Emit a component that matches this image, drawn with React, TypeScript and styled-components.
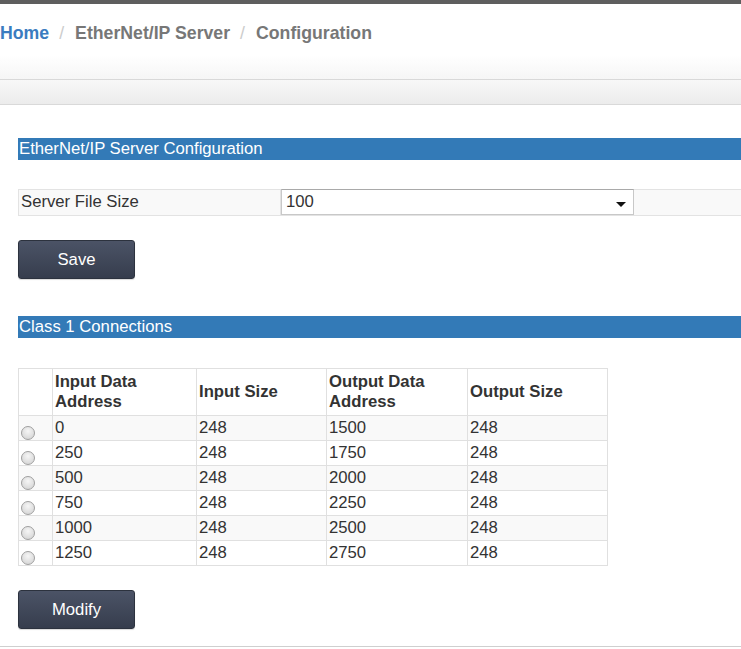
import React from "react";
import styled, { createGlobalStyle } from "styled-components";

const GlobalStyle = createGlobalStyle`
  html, body {
    margin: 0;
    padding: 0;
    background: #fff;
    overflow: hidden;
  }
  body {
    font-family: "Liberation Sans", Arial, sans-serif;
    color: #333;
  }
`;

const Page = styled.div`
  width: 741px;
  height: 649px;
  border-top: 4px solid #5e5e5e;
  box-sizing: border-box;
  overflow: hidden;
`;

const Breadcrumb = styled.ol`
  list-style: none;
  margin: 0;
  padding: 8px 0 0;
  height: 51px;
  box-sizing: border-box;
  display: flex;
  align-items: center;
  font-size: 17.7px;
  font-weight: bold;
  color: #777;
  > li + li::before {
    content: "/";
    color: #ccc;
    font-weight: normal;
    padding: 0 11px 0 10px;
  }
  > li.home {
    color: #3a7cc0;
  }
`;

const HeadBand = styled.div`
  height: 24px;
  background: linear-gradient(#fff, #f6f6f6);
  border-bottom: 1px solid #d9d9d9;
`;

const ToolBar = styled.div`
  height: 24px;
  background: linear-gradient(#f8f8f8, #ececec);
  border-bottom: 1px solid #d9d9d9;
`;

const Body = styled.div`
  padding: 33px 0 0 18px;
  height: 542px;
  box-sizing: border-box;
  border-bottom: 1px solid #cfcfcf;
`;

const SectionTitle = styled.div<{ $gap?: number }>`
  margin-top: ${(p) => p.$gap ?? 0}px;
  height: 22px;
  line-height: 22px;
  background: #337ab7;
  color: #fff;
  font-size: 16.7px;
  padding-left: 1px;
  width: 800px;
`;

const FormRow = styled.div`
  margin-top: 29px;
  display: flex;
  height: 27px;
  width: 800px;
  border: 1px solid #e3e3e3;
  box-sizing: border-box;
  background: #f9f9f9;
  font-size: 16.7px;
`;

const Label = styled.div`
  width: 262px;
  padding-left: 2px;
  line-height: 24px;
  border-right: 1px solid #e3e3e3;
  box-sizing: border-box;
`;

const SelectBox = styled.div`
  width: 353px;
  height: 26px;
  margin-top: -1px;
  background: #fff;
  border: 1px solid #c8c8c8;
  border-top-color: #a9a9a9;
  box-sizing: border-box;
  display: flex;
  align-items: center;
  justify-content: space-between;
  padding: 0 7px 0 4px;
  &::after {
    content: "";
    border-left: 5px solid transparent;
    border-right: 5px solid transparent;
    border-top: 5px solid #111;
    margin-top: 4px;
  }
`;

const Button = styled.button<{ $gap: number }>`
  display: block;
  margin-top: ${(p) => p.$gap}px;
  width: 117px;
  height: 39px;
  border: 1px solid #2c323e;
  border-radius: 3px;
  background: linear-gradient(#4b5366, #363d4d);
  color: #fff;
  font-family: "Liberation Sans", Arial, sans-serif;
  font-size: 16.7px;
  padding: 0;
  box-shadow: 0 1px 1px rgba(0, 0, 0, 0.15);
`;

const Table = styled.table`
  margin-top: 30px;
  border-collapse: collapse;
  table-layout: fixed;
  width: 589px;
  font-size: 16.7px;
  color: #333;
  th, td {
    border: 1px solid #e0e0e0;
    padding: 0 2px;
    text-align: left;
  }
  th {
    font-weight: bold;
    line-height: 20px;
    height: 46px;
    padding-top: 0;
  }
  td {
    height: 24px;
    line-height: 24px;
  }
  tbody tr:nth-child(odd) {
    background: #f9f9f9;
  }
`;

const Radio = styled.span`
  display: inline-block;
  width: 14px;
  height: 14px;
  margin: 10px 0 0 0;
  border-radius: 50%;
  border: 1px solid #a0a0a0;
  box-sizing: border-box;
  background: radial-gradient(circle at 50% 35%, #f6f6f6, #cfcfcf);
  vertical-align: top;
`;

const rows = [
  ["0", "248", "1500", "248"],
  ["250", "248", "1750", "248"],
  ["500", "248", "2000", "248"],
  ["750", "248", "2250", "248"],
  ["1000", "248", "2500", "248"],
  ["1250", "248", "2750", "248"],
];

export default function App() {
  return (
    <Page>
      <GlobalStyle />
      <Breadcrumb>
        <li className="home">Home</li>
        <li>EtherNet/IP Server</li>
        <li>Configuration</li>
      </Breadcrumb>
      <HeadBand />
      <ToolBar />
      <Body>
        <SectionTitle>EtherNet/IP Server Configuration</SectionTitle>
        <FormRow>
          <Label>Server File Size</Label>
          <SelectBox>100</SelectBox>
        </FormRow>
        <Button $gap={24}>Save</Button>
        <SectionTitle $gap={37}>Class 1 Connections</SectionTitle>
        <Table>
          <colgroup>
            <col style={{ width: 34 }} />
            <col style={{ width: 144 }} />
            <col style={{ width: 130 }} />
            <col style={{ width: 141 }} />
            <col style={{ width: 140 }} />
          </colgroup>
          <thead>
            <tr>
              <th></th>
              <th>Input Data Address</th>
              <th>Input Size</th>
              <th>Output Data Address</th>
              <th>Output Size</th>
            </tr>
          </thead>
          <tbody>
            {rows.map((r) => (
              <tr key={r[0]}>
                <td>
                  <Radio />
                </td>
                {r.map((c, i) => (
                  <td key={i}>{c}</td>
                ))}
              </tr>
            ))}
          </tbody>
        </Table>
        <Button $gap={24}>Modify</Button>
      </Body>
    </Page>
  );
}
